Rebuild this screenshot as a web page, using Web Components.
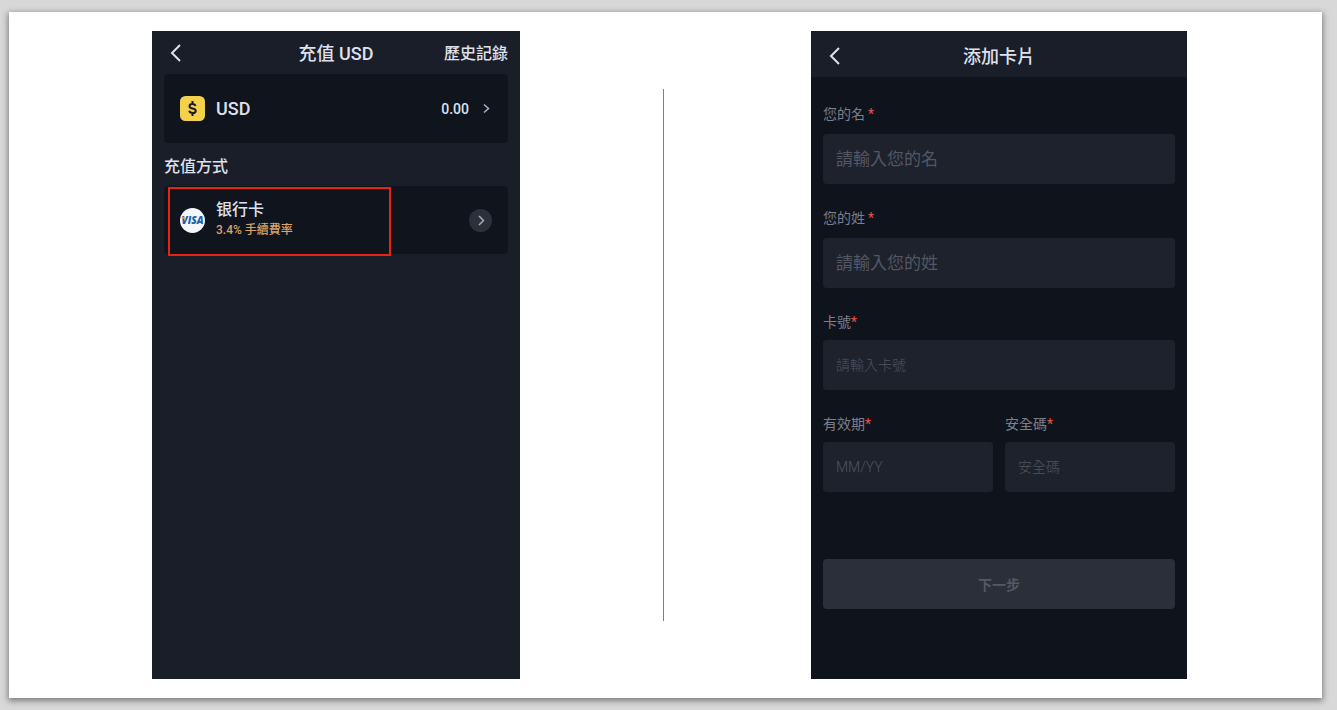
<!DOCTYPE html>
<html lang="zh-Hant">
<head>
<meta charset="utf-8">
<meta name="viewport" content="width=device-width, initial-scale=1">
<title>充值 USD</title>
<style>
  html, body { margin: 0; background: #d8d8d8; }
  body { font-family: Roboto, "Noto Sans CJK TC", "Noto Sans CJK SC", sans-serif; }
</style>
</head>
<body>
<demo-sheet>
  <phone-screen slot="left">
    <nav-bar slot="bar" heading="充值 USD" action="歷史記錄"></nav-bar>
    <asset-row></asset-row>
    <section-title>充值方式</section-title>
    <method-row></method-row>
  </phone-screen>
  <phone-screen slot="right" tall>
    <nav-bar slot="bar" tall heading="添加卡片"></nav-bar>
    <card-form></card-form>
  </phone-screen>
</demo-sheet>

<script>
const define = (name, html, init) => {
  const tpl = document.createElement('template');
  tpl.innerHTML = html;
  customElements.define(name, class extends HTMLElement {
    constructor() {
      super();
      this.attachShadow({ mode: 'open' }).append(tpl.content.cloneNode(true));
    }
    connectedCallback() { if (init) init(this, this.shadowRoot); }
  });
};

define('demo-sheet', `
  <style>
    :host { display: flex; box-sizing: border-box; min-height: 100vh; padding: 12px 15px 12px 9px; }
    main { flex: 1; display: grid; grid-template-columns: 1fr 1px 1fr; background: #fff;
           padding: 19px 4px 19px 0; box-shadow: 0 2px 6px 1px rgba(0,0,0,.42); }
    .side { display: flex; justify-content: center; }
    .right { padding-left: 16px; }
    .rule { background: #808080; margin: 58px 0; }
  </style>
  <main>
    <div class="side"><slot name="left"></slot></div>
    <div class="rule"></div>
    <div class="side right"><slot name="right"></slot></div>
  </main>`);

define('phone-screen', `
  <style>
    :host { display: block; box-sizing: border-box; width: 100%; max-width: 368px; background: #1a1e28; color: #dfe1ec; }
    :host([tall]) { max-width: 376px; background: #0f131c; }
    .body { padding: 0 12px; }
  </style>
  <slot name="bar"></slot>
  <div class="body"><slot></slot></div>`);

define('nav-bar', `
  <style>
    :host { display: block; background: #1a1e28; }
    header { display: grid; grid-template-columns: 1fr auto 1fr; align-items: center; height: 43px; padding: 0 12px; }
    :host([tall]) header { height: 46px; padding-top: 4px; box-sizing: border-box; }
    h1 { margin: 0; font-size: 18px; line-height: 24px; font-weight: 500; }
    button { justify-self: start; display: flex; padding: 0 4px; border: 0; background: none; color: inherit; }
    a { justify-self: end; font-size: 16px; line-height: 24px; font-weight: 500; color: inherit; text-decoration: none; white-space: nowrap; }
    h1, a { padding-top: 2px; }
  </style>
  <header>
    <button type="button" aria-label="返回"><svg width="14" height="20" viewBox="0 0 14 20" fill="none" stroke="currentColor" stroke-width="2"><path d="M12 2 4 10l8 8"/></svg></button>
    <h1></h1>
  </header>`, (el, root) => {
    root.querySelector('h1').textContent = el.getAttribute('heading');
    if (el.hasAttribute('action') && !root.querySelector('a')) {
      const a = document.createElement('a');
      a.href = '#history';
      a.textContent = el.getAttribute('action');
      root.querySelector('header').append(a);
    }
  });

define('asset-row', `
  <style>
    :host { display: block; }
    a { display: flex; align-items: center; height: 69px; box-sizing: border-box; padding: 0 16px; border-radius: 4px; background: #10141d; color: inherit; text-decoration: none; }
    .name { margin-left: 11px; font-size: 18px; line-height: 24px; font-weight: 500; }
    .sum { margin-left: auto; font-size: 14px; line-height: 20px; font-weight: 500; }
    .go { margin-left: 11px; }
  </style>
  <a href="#assets">
    <svg width="25" height="25" viewBox="0 0 50 50"><rect width="50" height="50" rx="11" fill="#f4d14c"/><path d="M25 10v6M25 34v6M31 20c-1-3-3-4-6-4-3.500 0-6 1.500-6 4.500s2.500 3.800 6 4.500 6.500 1.500 6.500 4.800S28.500 34 25 34c-3.500 0-5.800-1.500-6.500-4.500" fill="none" stroke="#191b20" stroke-width="4"/></svg>
    <span class="name">USD</span>
    <span class="sum">0.00</span>
    <svg class="go" width="12" height="12" viewBox="0 0 24 24" fill="none" stroke="#b0b4c0" stroke-width="3"><path d="m8 3 9 8-9 8"/></svg>
  </a>`);

define('section-title', `
  <style>
    :host { display: block; }
    h2 { margin: 0; padding: 12px 0 7px; font-size: 16px; line-height: 24px; font-weight: 500; }
  </style>
  <h2><slot></slot></h2>`);

define('method-row', `
  <style>
    :host { display: block; position: relative; }
    button { display: flex; align-items: center; width: 100%; height: 68px; padding: 0 16px; border: 0; border-radius: 4px; background: #10141d; color: inherit; font: inherit; text-align: left; }
    .text { flex: 1; margin-left: 11px; display: grid; padding-bottom: 3px; }
    .name { font-size: 16px; line-height: 22px; font-weight: 500; }
    .fee { font-size: 12px; line-height: 18px; font-weight: 500; color: #d9a468; }
    /* tutorial highlight laid over the card */
    .mark { position: absolute; left: 4px; top: 1px; width: 223px; height: 69px; box-sizing: border-box; border: 2px solid #e62510; pointer-events: none; }
  </style>
  <button type="button">
    <svg width="25" height="25" viewBox="0 0 50 50"><circle cx="25" cy="25" r="25" fill="#f5f7fa"/><text x="25" y="32" text-anchor="middle" font-family="Open Sans, sans-serif" font-size="20" font-weight="800" font-style="italic" fill="#1761a8">VISA</text><path d="M2 18h7l2 7Q8 20 2 18z" fill="#f2a92f"/></svg>
    <span class="text"><span class="name">银行卡</span><span class="fee">3.4% 手續費率</span></span>
    <svg width="23" height="23" viewBox="0 0 46 46" fill="none"><circle cx="23" cy="23" r="23" fill="#2c303b"/><path d="m20 14 9 9-9 9" stroke="#a6aab7" stroke-width="3"/></svg>
  </button>
  <div class="mark"></div>`);

define('form-field', `
  <style>
    :host { display: block; min-width: 0; }
    label { display: block; margin-bottom: 8px; font-size: 14px; line-height: 20px; color: #7b7f8d; }
    b { color: #e2544f; font-weight: 400; }
    input { display: block; box-sizing: border-box; width: 100%; height: 50px; padding: 0 13px; border: 0; border-radius: 4px; background: #1e222d; color: #dfe1ec; font-family: inherit; font-size: 14px; outline: 0; }
    input::placeholder { color: #50545f; opacity: 1; font-weight: 300; }
    :host([large]) label { margin-bottom: 10px; }
    :host([large]) b { margin-left: 3px; }
    :host([large]) input { font-size: 17px; }
    :host([large]) input::placeholder { color: #535763; font-weight: 400; }
  </style>
  <label for="control"><span></span><b>*</b></label>
  <input id="control" type="text">`, (el, root) => {
    root.querySelector('span').textContent = el.getAttribute('label');
    root.querySelector('input').placeholder = el.getAttribute('hint');
  });

define('card-form', `
  <style>
    :host { display: block; }
    form { display: grid; gap: 24px; padding-top: 27px; }
    .pair { display: grid; grid-template-columns: 1fr 1fr; gap: 12px; }
    button { height: 50px; margin-top: 43px; border: 0; border-radius: 4px; background: #2a2f39; color: #545965; font-family: inherit; font-size: 14px; font-weight: 700; }
  </style>
  <form>
    <form-field large label="您的名" hint="請輸入您的名"></form-field>
    <form-field large label="您的姓" hint="請輸入您的姓"></form-field>
    <form-field label="卡號" hint="請輸入卡號"></form-field>
    <div class="pair">
      <form-field label="有效期" hint="MM/YY"></form-field>
      <form-field label="安全碼" hint="安全碼"></form-field>
    </div>
    <button type="button">下一步</button>
  </form>`);
</script>
</body>
</html>
